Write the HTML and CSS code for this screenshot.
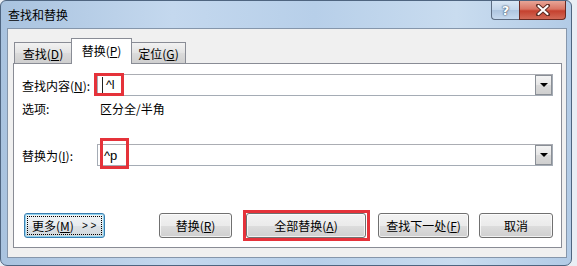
FILE: index.html
```html
<!DOCTYPE html>
<html lang="zh-CN">
<head>
<meta charset="utf-8">
<title>查找和替换</title>
<link rel="stylesheet" href="styles.css">
</head>
<body>
<div class="window">
  <div class="titlebar">
    <span class="title">查找和替换</span>
    <div class="caption-btns">
      <span class="cap-help">?</span>
      <span class="cap-close">
        <svg width="16" height="12" viewBox="0 0 16 12"><path d="M3 1.5 L13 10.5 M13 1.5 L3 10.5" stroke="#5a2a22" stroke-width="4" stroke-linecap="round"/><path d="M3.5 2 L12.5 10 M12.5 2 L3.5 10" stroke="#fff" stroke-width="2.2" stroke-linecap="round"/></svg>
      </span>
    </div>
  </div>
  <div class="client">
    <div class="tabs">
      <span class="tab">查找(<u>D</u>)</span>
      <span class="tab active">替换(<u>P</u>)</span>
      <span class="tab">定位(<u>G</u>)</span>
    </div>
    <div class="panel">
      <div class="row">
        <label class="lbl">查找内容(<u>N</u>):</label>
        <div class="combo">
          <span class="caret"></span><span class="val">^l</span>
          <span class="drop"><i></i></span>
          <span class="mark mark-find"></span>
        </div>
      </div>
      <div class="row opts">
        <span class="lbl">选项:</span>
        <span class="optval">区分全/半角</span>
      </div>
      <div class="row repl">
        <label class="lbl">替换为(<u>I</u>):</label>
        <div class="combo">
          <span class="val val2">^p</span>
          <span class="drop"><i></i></span>
          <span class="mark mark-repl"></span>
        </div>
      </div>
      <div class="buttons">
        <button class="btn btn-more"><span class="focus">更多(<u>M</u>) <span class="arr">&gt; &gt;</span></span></button>
        <button class="btn btn-rep">替换(<u>R</u>)</button>
        <button class="btn btn-all">全部替换(<u>A</u>)<span class="mark mark-all"></span></button>
        <button class="btn btn-next">查找下一处(<u>F</u>)</button>
        <button class="btn btn-cancel">取消</button>
      </div>
    </div>
  </div>
</div>
</body>
</html>
```

FILE: styles.css
```css
* { box-sizing: border-box; }
html, body { margin: 0; padding: 0; }
body {
  width: 577px; height: 266px; overflow: hidden;
  background: #e9eef4;
  font-family: "Noto Sans CJK SC", "Noto Sans", sans-serif;
  font-size: 12px; color: #000;
}
.window {
  width: 572px; height: 266px;
  background: linear-gradient(90deg, #a9c3df 0%, #c4d8ee 30%, #b7cfe9 55%, #c9dcef 80%, #b2cbe6 100%);
  border: 1px solid #4f6580;
  border-radius: 6px 6px 7px 7px;
  display: flex; flex-direction: column;
  padding: 0 4px 7px 6px;
}
.titlebar {
  height: 27px; display: flex; align-items: flex-start; justify-content: space-between;
}
.title { margin-top: 5px; margin-left: 1px; font-size: 12px; color: #000; }
.caption-btns { display: flex; margin-right: 1px; }
.cap-help, .cap-close {
  height: 19px; display: flex; align-items: center; justify-content: center;
  border: 1px solid #5d6d82; border-top: none;
}
.cap-help {
  width: 28px; border-right: none; border-radius: 0 0 0 4px;
  background: linear-gradient(#d8e6f4, #c2d5ea 50%, #aec5df 52%, #c6d9ee);
  color: #fff; font-family: "DejaVu Sans", sans-serif; font-weight: bold; font-size: 13px;
  text-shadow: 0 0 2px #34475f, 0 0 1px #34475f;
}
.cap-close {
  width: 47px; border-radius: 0 0 4px 0;
  background: linear-gradient(#e7a597, #d97564 45%, #c5412f 55%, #d26a57);
  border-color: #6b2a22;
}
.client {
  flex: 1;
  background: #f0f0f0;
  border: 1px solid #8596ab;
  padding: 9px 4px 9px 5px;
  display: flex; flex-direction: column;
}
.tabs { display: flex; align-items: flex-end; height: 25px; margin-left: 1px; position: relative; z-index: 1; }
.tab {
  height: 21px; padding: 0; display: flex; align-items: center; justify-content: center;
  white-space: nowrap;
  border: 1px solid #898c95; border-bottom: none;
  background: linear-gradient(#f2f2f2, #e3e3e3 50%, #dbdbdb 51%, #cfcfcf);
  margin-right: -1px;
}
.tab:first-child { width: 58px; }
.tab.active {
  width: 61px; background: #fff; padding: 0 0 3px 0;
  margin-bottom: -1px; height: 26px; position: relative; z-index: 2;
}
.tab:last-child { width: 55px; }
.panel {
  flex: 1;
  background: #fff;
  border: 1px solid #898c95;
  padding: 10px 8px 9px 8px;
  display: flex; flex-direction: column;
}
.row { display: flex; align-items: center; }
.lbl { width: 75px; flex: none; }
.combo {
  flex: 1; height: 22px; position: relative;
  border: 1px solid #a5acb5; border-top-color: #abadb3; background: #fff;
  display: flex; align-items: center;
}
.caret { width: 1px; height: 16px; background: #222; margin-left: 4px; }
.val { margin-left: 3px; font-family: "Liberation Sans", sans-serif; font-size: 12.5px; }
.val2 { margin-left: 6px; font-size: 13px; }
.drop {
  position: absolute; right: 0; top: 0; width: 17px; height: 20px;
  border: 1px solid #8a8f96;
  background: linear-gradient(#f4f4f4, #e6e6e6 50%, #d9d9d9 51%, #cfcfcf);
  display: flex; align-items: center; justify-content: center;
}
.drop i {
  width: 0; height: 0; border-left: 4px solid transparent; border-right: 4px solid transparent;
  border-top: 4px solid #000;
}
.mark { position: absolute; border: 3px solid #e5323a; pointer-events: none; }
.mark-find { left: -4px; top: -2px; width: 30px; height: 23px; }
.mark-repl { left: 2px; top: -7px; width: 29px; height: 31px; }
.mark-all { left: -4px; top: -4px; width: 127px; height: 31px; }
.opts { margin-top: 4px; height: 16px; }
.optval { margin-left: 3px; }
.repl { margin-top: 28px; }
.buttons { display: flex; margin-top: 47px; padding-left: 2px; }
.btn {
  height: 25px; position: relative;
  font-family: "Noto Sans CJK SC", "Noto Sans", sans-serif; font-size: 12px; color: #000;
  border: 1px solid #707070; border-radius: 3px;
  background: linear-gradient(#f2f2f2, #ebebeb 50%, #dddddd 51%, #cfcfcf);
  padding: 0; display: flex; align-items: center; justify-content: center;
  box-shadow: inset 0 0 0 1px rgba(255,255,255,0.7);
  white-space: nowrap;
}
.btn-more { width: 81px; border-color: #3c7fb1; box-shadow: inset 0 0 0 1px #8fd3ef; background: linear-gradient(#f1f4f6, #e8ecef 50%, #dde2e6 51%, #d2d8dc); }
.btn-more .focus { border: 1px dotted #000; padding: 0 4px 0 4px; height: 19px; display: flex; align-items: center; width: 75px; justify-content: flex-start; }
.arr { margin-left: 8px; font-family: "Liberation Sans", sans-serif; font-size: 10px; }
.btn-rep { width: 73px; margin-left: 54px; }
.btn-all { width: 120px; margin-left: 14px; }
.btn-next { width: 91px; margin-left: 12px; }
.btn-cancel { width: 74px; margin-left: 10px; }
u { text-decoration: underline; text-underline-offset: 1px; }
```
